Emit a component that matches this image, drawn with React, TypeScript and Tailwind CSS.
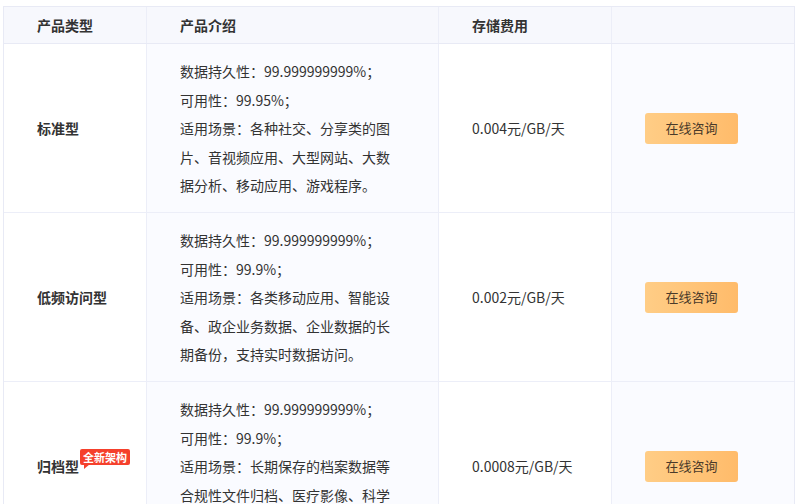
const rows = [
  {
    type: "标准型",
    lines: ["数据持久性：99.999999999%；", "可用性：99.95%；", "适用场景：各种社交、分享类的图片、音视频应用、大型网站、大数据分析、移动应用、游戏程序。"],
    price: "0.004元/GB/天",
  },
  {
    type: "低频访问型",
    lines: ["数据持久性：99.999999999%；", "可用性：99.9%；", "适用场景：各类移动应用、智能设备、政企业务数据、企业数据的长期备份，支持实时数据访问。"],
    price: "0.002元/GB/天",
  },
  {
    type: "归档型",
    badge: true,
    lines: ["数据持久性：99.999999999%；", "可用性：99.9%；", "适用场景：长期保存的档案数据等合规性文件归档、医疗影像、科学"],
    price: "0.0008元/GB/天",
  },
];

export default function App() {
  return (
    <div className="w-[801px] h-[504px] overflow-hidden bg-white pt-[6px] pl-[3px]" style={{ fontFamily: '"Noto Sans CJK SC", "Noto Sans", sans-serif' }}>
      <div className="w-[792px] border border-[#e8eaf5] text-[14px] text-[#333]">
        <div className="flex h-[37px] bg-[#f7f8fd] border-b border-[#e8eaf5] font-bold text-[#333] items-stretch">
          <div className="w-[143px] pl-[33px] flex items-center border-r border-[#eceef8]">产品类型</div>
          <div className="w-[292px] pl-[33px] flex items-center border-r border-[#eceef8]">产品介绍</div>
          <div className="w-[173px] pl-[33px] flex items-center border-r border-[#eceef8]">存储费用</div>
          <div className="flex-1"></div>
        </div>
        {rows.map((r, i) => (
          <div key={i} className="flex h-[169px] border-b border-[#eceef8] shrink-0">
            <div className="w-[143px] pl-[33px] flex items-center border-r border-[#eceef8] bg-white font-bold">
              <span>{r.type}</span>
              {r.badge && (
                <span className="relative -mt-[18px] ml-[1px] bg-[#f5402c] text-white text-[11px] leading-[16px] px-[3px] rounded-[2px] font-bold">
                  全新架构
                  <span className="absolute left-[4px] -bottom-[4px] w-0 h-0 border-t-[5px] border-t-[#f5402c] border-r-[6px] border-r-transparent"></span>
                </span>
              )}
            </div>
            <div className="w-[292px] pl-[33px] pt-[13px] border-r border-[#eceef8] bg-[#fafbff] leading-[28.5px] text-[#333]">
              <div className="w-[222px]">
                {r.lines.map((l, j) => (
                  <div key={j}>{l}</div>
                ))}
              </div>
            </div>
            <div className="w-[173px] pl-[33px] flex items-center border-r border-[#eceef8] bg-white">{r.price}</div>
            <div className="flex-1 bg-[#fafbff] flex items-center pl-[33px]">
              <button className="w-[93px] h-[31px] rounded-[3px] bg-gradient-to-r from-[#ffcd86] to-[#ffbb6a] text-[13px] text-[#4a3a2a]">在线咨询</button>
            </div>
          </div>
        ))}
      </div>
    </div>
  );
}
